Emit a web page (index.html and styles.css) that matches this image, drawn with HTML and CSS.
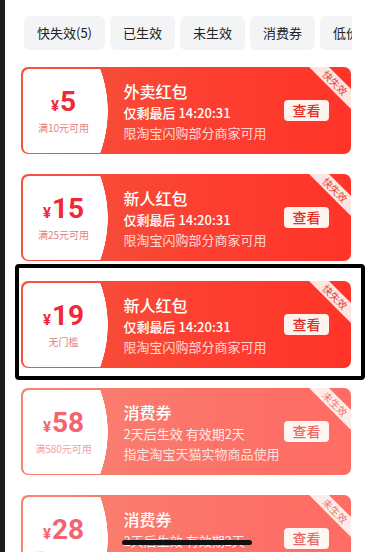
FILE: index.html
```html
<!DOCTYPE html>
<html lang="zh-CN">
<head>
<meta charset="utf-8">
<title>红包卡券</title>
<link rel="stylesheet" href="styles.css">
</head>
<body>
<div class="page">
  <div class="tabs">
    <div class="tab">快失效(5)</div>
    <div class="tab">已生效</div>
    <div class="tab">未生效</div>
    <div class="tab">消费券</div>
    <div class="tab">低价券</div>
  </div>

  <div class="list">
    <div class="coupon">
      <div class="stub">
        <div class="amount"><span class="yen">¥</span><span class="num">5</span></div>
        <div class="cond">满10元可用</div>
      </div>
      <div class="info">
        <div class="title">外卖红包</div>
        <div class="line strong">仅剩最后 14:20:31</div>
        <div class="line dim">限淘宝闪购部分商家可用</div>
      </div>
      <div class="btn">查看</div>
      <div class="ribbon">快失效</div>
    </div>

    <div class="coupon">
      <div class="stub">
        <div class="amount"><span class="yen">¥</span><span class="num">15</span></div>
        <div class="cond">满25元可用</div>
      </div>
      <div class="info">
        <div class="title">新人红包</div>
        <div class="line strong">仅剩最后 14:20:31</div>
        <div class="line dim">限淘宝闪购部分商家可用</div>
      </div>
      <div class="btn">查看</div>
      <div class="ribbon">快失效</div>
    </div>

    <div class="selected-wrap">
      <div class="coupon">
        <div class="stub">
          <div class="amount"><span class="yen">¥</span><span class="num">19</span></div>
          <div class="cond">无门槛</div>
        </div>
        <div class="info">
          <div class="title">新人红包</div>
          <div class="line strong">仅剩最后 14:20:31</div>
          <div class="line dim">限淘宝闪购部分商家可用</div>
        </div>
        <div class="btn">查看</div>
        <div class="ribbon">快失效</div>
      </div>
    </div>

    <div class="coupon pending">
      <div class="stub">
        <div class="amount"><span class="yen">¥</span><span class="num">58</span></div>
        <div class="cond">满580元可用</div>
      </div>
      <div class="info">
        <div class="title">消费券</div>
        <div class="line dim2">2天后生效 有效期2天</div>
        <div class="line dim">指定淘宝天猫实物商品使用</div>
      </div>
      <div class="btn">查看</div>
      <div class="ribbon">未生效</div>
    </div>

    <div class="coupon pending">
      <div class="stub">
        <div class="amount"><span class="yen">¥</span><span class="num">28</span></div>
        <div class="cond">满280元可用</div>
      </div>
      <div class="info">
        <div class="title">消费券</div>
        <div class="line dim2">2天后生效 有效期2天</div>
        <div class="line dim">指定淘宝天猫实物商品使用</div>
      </div>
      <div class="btn">查看</div>
      <div class="ribbon">未生效</div>
    </div>
  </div>
</div>
<div class="home-indicator"></div>
</body>
</html>
```

FILE: styles.css
```css
html, body {
  margin: 0;
  padding: 0;
  background: #fff;
}

body {
  font-family: "Noto Sans CJK SC", "Noto Sans", sans-serif;
  color: #222;
}

.page {
  box-sizing: border-box;
  height: 552px;
  overflow: hidden;
  border-left: 5px solid #1c1c1c;
  padding-top: 16px;
}

.tabs {
  display: flex;
  gap: 5px;
  margin-left: 19px;
  width: 328px;
  overflow: hidden;
}

.tab {
  flex: none;
  height: 34px;
  line-height: 34px;
  padding: 0 13px;
  border-radius: 6px;
  background: #f3f4f6;
  font-size: 13px;
  color: #222;
  white-space: nowrap;
}

.list {
  display: flex;
  flex-direction: column;
  gap: 20px;
  margin: 17px 0 0 16px;
  width: 330px;
}

.coupon {
  position: relative;
  display: flex;
  height: 87px;
  border-radius: 7px;
  overflow: hidden;
  background: linear-gradient(90deg, #f4563d 0%, #fc3f31 55%, #ff3428 100%);
  color: #fff;
}

.coupon.pending {
  opacity: 0.72;
}

.stub {
  box-sizing: border-box;
  flex: none;
  width: 86px;
  margin: 1.5px 0 1.5px 1.5px;
  padding-right: 4px;
  border-radius: 6px 0 0 6px;
  background: radial-gradient(circle 121px at -36px 50%, #fff 120.5px, rgba(255, 255, 255, 0) 121px);
  display: flex;
  flex-direction: column;
  align-items: center;
  justify-content: center;
}

.amount {
  display: flex;
  align-items: baseline;
  line-height: 30px;
  color: #f0283a;
  font-family: Roboto, "Liberation Sans", sans-serif;
  font-weight: 700;
}

.yen {
  font-size: 15px;
  margin-right: 1px;
}

.num {
  font-size: 28px;
}

.cond {
  font-size: 10px;
  line-height: 14px;
  color: #e5807f;
  white-space: nowrap;
}

.info {
  flex: 1;
  min-width: 0;
  padding: 11.5px 0 0 15px;
  white-space: nowrap;
}

.title {
  font-size: 16px;
  line-height: 24px;
  font-weight: 500;
}

.line {
  font-size: 13px;
  line-height: 20px;
}

.line.strong {
  font-weight: 500;
}

.line.dim {
  color: rgba(255, 255, 255, 0.8);
}

.line.dim2 {
  color: rgba(255, 255, 255, 0.88);
}

.btn {
  flex: none;
  align-self: center;
  width: 45px;
  height: 21px;
  line-height: 21px;
  margin-right: 22px;
  border-radius: 4px;
  background: #fff3ee;
  color: #de3028;
  font-size: 14px;
  font-weight: 500;
  text-align: center;
}

.ribbon {
  position: absolute;
  top: 8.6px;
  right: -24.4px;
  width: 80px;
  height: 14px;
  line-height: 14px;
  background: #fde6e1;
  color: #e8412f;
  font-size: 10px;
  text-align: center;
  transform: rotate(45deg);
}

.selected-wrap {
  position: relative;
}

.selected-wrap::after {
  content: "";
  position: absolute;
  left: -6px;
  top: -17px;
  right: -14px;
  bottom: -12px;
  border: 4px solid #000;
  border-radius: 4px;
  pointer-events: none;
}

.home-indicator {
  position: fixed;
  left: 122px;
  bottom: 7px;
  width: 130px;
  height: 5px;
  border-radius: 3px;
  background: #111;
}
```
